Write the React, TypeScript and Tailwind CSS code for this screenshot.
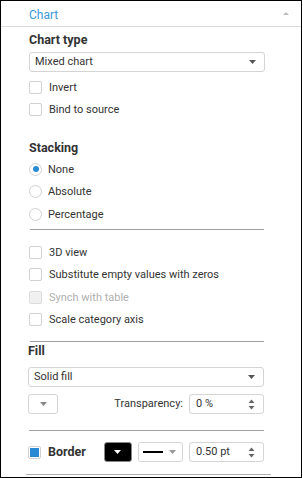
import React from "react";

const font = { fontFamily: "Roboto, 'Liberation Sans', sans-serif" };

function DownArrow({ color = "#555" }: { color?: string }) {
  return (
    <svg width="7" height="4" viewBox="0 0 7 4">
      <path d="M0 0 H7 L3.5 4 Z" fill={color} />
    </svg>
  );
}

function Spin() {
  return (
    <svg width="7" height="11" viewBox="0 0 7 11">
      <path d="M0.5 4 H6.5 L3.5 0.5 Z" fill="#666" />
      <path d="M0.5 7 H6.5 L3.5 10.5 Z" fill="#666" />
    </svg>
  );
}

function Check({ label, disabled }: { label: string; disabled?: boolean }) {
  return (
    <div className="flex items-center gap-[7px] h-full">
      <div
        className={
          "w-[13px] h-[13px] rounded-[2px] border " +
          (disabled ? "border-[#dcdcdc] bg-[#f0f0f0]" : "border-[#d2d2d2] bg-white")
        }
      />
      <span className={"pt-[2px] " + (disabled ? "text-[#b0b0b0]" : "text-[#333]")}>{label}</span>
    </div>
  );
}

function Radio({ label, checked }: { label: string; checked?: boolean }) {
  return (
    <div className="flex items-center gap-[6px] h-full">
      <div className="w-[13px] h-[13px] rounded-full border border-[#d2d2d2] bg-white flex items-center justify-center">
        {checked && <div className="w-[6px] h-[6px] rounded-full bg-[#2a8ad4]" />}
      </div>
      <span className="pt-[2px] text-[#333]">{label}</span>
    </div>
  );
}

function Select({ value }: { value: string }) {
  return (
    <div className="h-[20px] w-[236px] border border-[#d4d4d4] rounded-[3px] flex items-center justify-between pl-[5px] pr-[8px] bg-white">
      <span className="pt-[1px] text-[#333]">{value}</span>
      <DownArrow />
    </div>
  );
}

export default function App() {
  return (
    <div
      className="w-[302px] h-[478px] border border-black bg-white text-[11px] flex flex-col"
      style={font}
    >
      <div className="h-[26px] shrink-0 border-b border-[#dcdcdc] flex items-center justify-between pl-[28px] pr-[12px]">
        <span className="pt-[2px] text-[#3b99d8] text-[12px]">Chart</span>
        <svg width="6" height="3" viewBox="0 0 6 3">
          <path d="M0 3 H6 L3 0 Z" fill="#bbb" />
        </svg>
      </div>
      <div className="pl-[28px] flex flex-col shrink-0">
        <div className="h-[25px] pt-[2px] flex items-center font-bold text-[12.5px] text-[#333]">Chart type</div>
        <Select value="Mixed chart" />
        <div className="mt-[4px] h-[22px]"><Check label="Invert" /></div>
        <div className="h-[22px]"><Check label="Bind to source" /></div>
        <div className="mt-[17px] h-[21px] pt-[2px] flex items-center font-bold text-[12.5px] text-[#333]">Stacking</div>
        <div className="h-[22px]"><Radio label="None" checked /></div>
        <div className="h-[23px]"><Radio label="Absolute" /></div>
        <div className="h-[22px]"><Radio label="Percentage" /></div>
        <div className="mt-[4px] ml-[1px] w-[234px] h-[1px] bg-[#a0a0a0]" />
        <div className="mt-[11px] h-[22px]"><Check label="3D view" /></div>
        <div className="h-[23px]"><Check label="Substitute empty values with zeros" /></div>
        <div className="h-[22px]"><Check label="Synch with table" disabled /></div>
        <div className="h-[23px]"><Check label="Scale category axis" /></div>
        <div className="mt-[10px] ml-[1px] w-[234px] h-[1px] bg-[#a0a0a0]" />
        <div className="h-[16px] pt-[2px] -ml-[1px] flex items-center font-bold text-[12.5px] text-[#333]">Fill</div>
        <div className="mt-[9px] -ml-[1px]"><Select value="Solid fill" /></div>
        <div className="mt-[7px] -ml-[1px] h-[20px] w-[236px] flex items-center">
          <div className="w-[30px] h-[20px] border border-[#d4d4d4] rounded-[3px] flex items-center justify-center">
            <DownArrow color="#888" />
          </div>
          <span className="ml-auto pt-[1px] text-[#333]">Transparency:</span>
          <div className="ml-[6px] w-[75px] h-[20px] border border-[#d4d4d4] rounded-[3px] flex items-center justify-between pl-[6px] pr-[8px]">
            <span className="pt-[1px] text-[#333]">0 %</span>
            <Spin />
          </div>
        </div>
        <div className="mt-[16px] w-[235px] h-[1px] bg-[#a0a0a0]" />
        <div className="mt-[11px] -ml-[1px] h-[20px] w-[236px] flex items-center">
          <div className="w-[13px] h-[13px] border border-[#d2d2d2] rounded-[2px] bg-white flex items-center justify-center">
            <div className="w-[9px] h-[9px] bg-[#2a8ad4]" />
          </div>
          <span className="ml-[7px] pt-[1px] font-bold text-[12.5px] text-[#333]">Border</span>
          <div className="ml-[18px] w-[28px] h-[20px] bg-black rounded-[3px] border border-[#888] flex items-center justify-center">
            <DownArrow color="#fff" />
          </div>
          <div className="ml-[6px] w-[45px] h-[20px] border border-[#d4d4d4] rounded-[3px] flex items-center pl-[4px] pr-[6px] justify-between">
            <div className="w-[20px] h-[2px] bg-black" />
            <DownArrow color="#999" />
          </div>
          <div className="ml-auto w-[75px] h-[20px] border border-[#d4d4d4] rounded-[3px] flex items-center justify-between pl-[6px] pr-[8px]">
            <span className="pt-[1px] text-[#333]">0.50 pt</span>
            <Spin />
          </div>
        </div>
      </div>
      <div className="mt-[12px] ml-[25px] w-[245px] h-[1px] bg-[#b0b0b0]" />
    </div>
  );
}
